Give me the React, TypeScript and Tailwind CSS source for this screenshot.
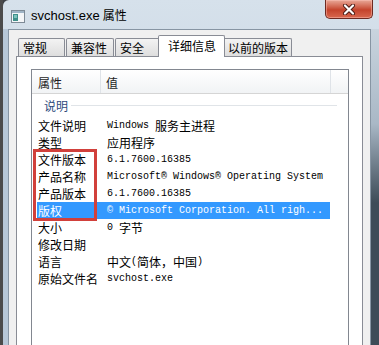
import React from "react"

const cjkFont = "font-['Noto_Sans_CJK_SC',sans-serif]"
const cjkRun = /([\u2E80-\u9FFF\u3000-\u303F\uFF00-\uFFEF]+)/

// mixed value text: latin in a narrow mono, han characters in the cjk face
const Val = ({ text }: { text: string }) => (
  <>
    {text.split(cjkRun).map((part, i) =>
      part === "" ? null : cjkRun.test(part) ? (
        <span key={i} className={`${cjkFont} text-[12px]`}>
          {part}
        </span>
      ) : (
        <span key={i} className="font-['Liberation_Mono',monospace] text-[10px] whitespace-pre">
          {part}
        </span>
      )
    )}
  </>
)

type Tab = { label: string; cls: string; active?: boolean }

const tabs: Tab[] = [
  { label: "常规", cls: "w-[47px]" },
  { label: "兼容性", cls: "ml-px w-[48px]" },
  { label: "安全", cls: "ml-px w-[45px]" },
  { label: "详细信息", cls: "-ml-[2px] w-[67px]", active: true },
  { label: "以前的版本", cls: "-ml-[2px] w-[69px]" },
]

const rows: [string, string][] = [
  ["文件说明", "Windows 服务主进程"],
  ["类型", "应用程序"],
  ["文件版本", "6.1.7600.16385"],
  ["产品名称", "Microsoft® Windows® Operating System"],
  ["产品版本", "6.1.7600.16385"],
  ["版权", "© Microsoft Corporation. All righ..."],
  ["大小", "0 字节"],
  ["修改日期", ""],
  ["语言", "中文(简体，中国)"],
  ["原始文件名", "svchost.exe"],
]

const selected = 5

const App = () => {
  return (
    <div className="flex h-[345px] w-[379px] overflow-hidden bg-[#3d4146]">
      <div className="w-[3px] bg-[#4b4b4b]" />

      <div className="flex flex-1 flex-col rounded-tl-[6px] bg-gradient-to-b from-[#d6e1eb] to-[#b9c8d8]">
        {/* Title bar */}
        <div className="flex h-[29px] items-start">
          <svg width="14" height="13" viewBox="0 0 14 13" className="ml-[8px] mt-[10px]">
            <rect x="0.5" y="0.5" width="13" height="12" fill="#f4f6f8" stroke="#7d8a96" />
            <rect x="1" y="1" width="12" height="2" fill="#9fb4c6" />
            <rect x="2" y="4" width="5" height="7" fill="#3f8f8a" />
            <rect x="3" y="5" width="3" height="3" fill="#7cc2bd" />
          </svg>
          <div className="ml-[6px] mt-[7px] flex items-baseline text-[13px] leading-[16px] text-black">
            <span className="font-['Liberation_Sans',sans-serif]">svchost.exe</span>
            <span className={`${cjkFont} ml-[3px] text-[12px]`}>属性</span>
          </div>
          <div className="ml-auto mr-[6px] flex h-[19px] w-[48px] items-center justify-center rounded-b-[5px] border border-t-0 border-[#6d2a22] bg-gradient-to-b from-[#e8a898] via-[#c4432c] via-55% to-[#d8674e] shadow-[inset_0_0_0_1px_rgba(255,200,190,0.45)]">
            <svg width="14" height="11" viewBox="0 0 14 11">
              <path d="M3 1.5 L11 9.5 M11 1.5 L3 9.5" stroke="#4a1a14" strokeWidth="4" strokeLinecap="round" />
              <path d="M3 1.5 L11 9.5 M11 1.5 L3 9.5" stroke="#ffffff" strokeWidth="2.2" strokeLinecap="round" />
            </svg>
          </div>
        </div>

        <div className="flex min-h-0 flex-1">
          {/* left frame */}
          <div className="w-[5px] bg-[#b7c7d7]" />

          {/* Dialog client area */}
          <div className="flex w-[363px] flex-col border-l border-r border-t border-[#8795a3] bg-[#f0f0f0]">
            {/* Tabs */}
            <div className="mt-[5px] flex h-[21px] items-end pl-[9px]">
              {tabs.map((t) =>
                t.active ? (
                  <div
                    key={t.label}
                    className={`${t.cls} relative z-10 -mb-px flex h-[22px] items-center rounded-t-[2px] border border-b-0 border-[#898c95] bg-white pl-[9px] pb-[2px] ${cjkFont} text-[12px] leading-none text-black`}
                  >
                    {t.label}
                  </div>
                ) : (
                  <div
                    key={t.label}
                    className={`${t.cls} flex h-[18px] items-center rounded-t-[2px] border border-b-0 border-[#898c95] bg-gradient-to-b from-[#f3f3f3] to-[#dedede] pl-[4px] ${cjkFont} text-[12px] leading-none text-black`}
                  >
                    {t.label}
                  </div>
                )
              )}
            </div>

            {/* Tab panel */}
            <div className="ml-[7px] flex w-[347px] flex-1 flex-col border border-b-0 border-[#898c95] bg-white">
              {/* List view */}
              <div className="relative ml-[14px] mt-[12px] flex w-[318px] flex-1 flex-col border border-b-0 border-[#828790] bg-white">
                {/* Header */}
                <div className="flex h-[24px] border-b border-[#d5d5d5] bg-gradient-to-b from-white to-[#f1f3f5] text-[12px] text-[#1e1e1e]">
                  <div className={`${cjkFont} flex w-[69px] items-center border-r border-[#dfe3e8] pl-[6px] pt-[2px]`}>属性</div>
                  <div className={`${cjkFont} flex w-[230px] items-center border-r border-[#dfe3e8] pl-[5px] pt-[2px]`}>值</div>
                  <div className="flex-1" />
                </div>

                {/* Group header */}
                <div className="flex h-[23px] items-center pl-[12px] pr-[11px]">
                  <span className={`${cjkFont} text-[12px] leading-none text-[#2d4a7c]`}>说明</span>
                  <div className="ml-[3px] h-px flex-1 bg-[#e0e4e8]" />
                </div>

                {/* Rows */}
                {rows.map(([label, value], i) => {
                  const sel = i === selected
                  return (
                    <div
                      key={label}
                      className={`ml-[5px] flex h-[17px] w-[293px] items-center ${sel ? "bg-[#3399ff] text-white" : "text-black"}`}
                    >
                      <div className={`${cjkFont} w-[63px] pl-px text-[12px] leading-none`}>{label}</div>
                      <div className="flex flex-1 items-center pl-[7px] leading-none">
                        <Val text={value} />
                      </div>
                    </div>
                  )
                })}

                {/* red annotation box */}
                <div className="absolute left-[1px] top-[79px] h-[72px] w-[64px] border-[3px] border-[#d1403b]" />
              </div>
            </div>
          </div>

          {/* right frame */}
          <div className="flex-1 bg-gradient-to-b from-[#c9d4de] via-[#a9b8c6] via-30% to-[#3e4c58] to-55%" />
        </div>
      </div>
    </div>
  )
}

export default App
